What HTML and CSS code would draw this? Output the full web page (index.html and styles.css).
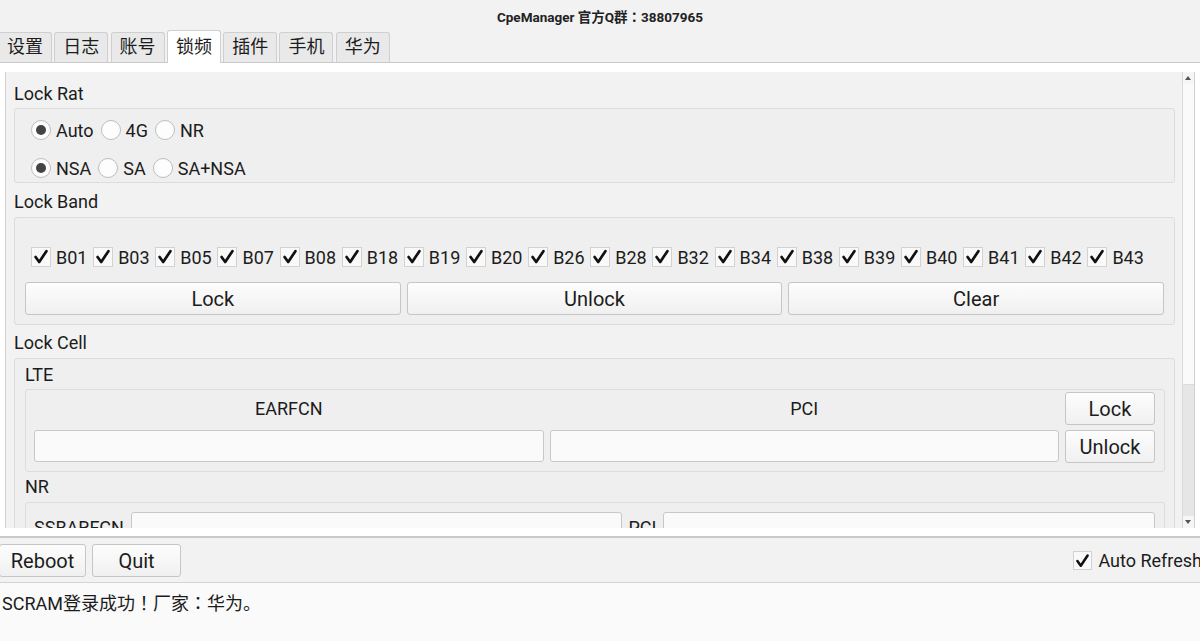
FILE: index.html
```html
<!DOCTYPE html>
<html>
<head>
    <meta charset="UTF-8">
    <title>CpeManager</title>
    <link rel="stylesheet" href="styles.css">
</head>
<body>
    <div class="window">
        <div class="titlebar">CpeManager 官方Q群<span class="punct">：</span>38807965</div>

        <div class="tabs">
            <div class="tab">设置</div>
            <div class="tab">日志</div>
            <div class="tab">账号</div>
            <div class="tab active">锁频</div>
            <div class="tab">插件</div>
            <div class="tab">手机</div>
            <div class="tab">华为</div>
        </div>

        <div class="pane">
            <div class="scroll">
                <div class="scroll-body">
                    <div class="section-title">Lock Rat</div>
                    <div class="group rat-group">
                        <div class="radio-row">
                            <label class="radio checked"><span class="dot"></span>Auto</label>
                            <label class="radio"><span class="dot"></span>4G</label>
                            <label class="radio"><span class="dot"></span>NR</label>
                        </div>
                        <div class="radio-row">
                            <label class="radio checked"><span class="dot"></span>NSA</label>
                            <label class="radio"><span class="dot"></span>SA</label>
                            <label class="radio"><span class="dot"></span>SA+NSA</label>
                        </div>
                    </div>

                    <div class="section-title band-title">Lock Band</div>
                    <div class="group band-group">
                        <div class="check-row" id="bands"></div>
                        <div class="btn-row">
                            <button class="btn">Lock</button>
                            <button class="btn">Unlock</button>
                            <button class="btn">Clear</button>
                        </div>
                    </div>

                    <div class="section-title cell-title">Lock Cell</div>
                    <div class="group cell-group">
                        <div class="sub-title">LTE</div>
                        <div class="group inner lte-grid">
                            <div class="field-label">EARFCN</div>
                            <div class="field-label">PCI</div>
                            <button class="btn small">Lock</button>
                            <input class="input" type="text">
                            <input class="input" type="text">
                            <button class="btn small">Unlock</button>
                        </div>
                        <div class="sub-title nr-title">NR</div>
                        <div class="group inner nr-row">
                            <span class="nr-label">SSBARFCN</span>
                            <input class="input" type="text">
                            <span class="nr-label">PCI</span>
                            <input class="input" type="text">
                        </div>
                    </div>
                </div>
                <div class="scrollbar">
                    <div class="arrow up"></div>
                    <div class="track">
                        <div class="thumb"></div>
                    </div>
                    <div class="arrow down"></div>
                </div>
            </div>
        </div>

        <div class="bottombar">
            <button class="btn bar-btn reboot">Reboot</button>
            <button class="btn bar-btn">Quit</button>
            <label class="check auto-refresh"><span class="box"><svg viewBox="0 0 20 20"><path d="M4 10 L8 15.5 L16 3.5"/></svg></span>Auto Refresh</label>
        </div>

        <div class="log">SCRAM登录成功<span class="punct">！</span>厂家<span class="punct">：</span>华为。</div>
    </div>

    <script>
        // 频段列表
        var bands = ['B01','B03','B05','B07','B08','B18','B19','B20','B26','B28','B32','B34','B38','B39','B40','B41','B42','B43'];
        var row = document.getElementById('bands');
        bands.forEach(function (b) {
            var item = document.createElement('label');
            item.className = 'check';
            item.innerHTML = '<span class="box"><svg viewBox="0 0 20 20"><path d="M4 10 L8 15.5 L16 3.5"/></svg></span>' + b;
            row.appendChild(item);
        });
    </script>
</body>
</html>
```

FILE: styles.css
```css
* {
    margin: 0;
    padding: 0;
    box-sizing: border-box;
}

body {
    font-family: Roboto, "Noto Sans CJK SC", sans-serif;
    font-size: 18px;
    color: #1c1c1c;
    background-color: #f2f2f2;
    overflow: hidden;
}

.window {
    width: 1200px;
    height: 641px;
    display: flex;
    flex-direction: column;
    overflow: hidden;
}

/* 全角标点居中 */
.punct {
    font-family: "Noto Sans CJK TC", sans-serif;
}

.titlebar {
    height: 31px;
    line-height: 32px;
    text-align: center;
    font-size: 13.5px;
    font-weight: bold;
    color: #222;
}

/* tabs */
.tabs {
    height: 32px;
    display: flex;
    align-items: flex-end;
    gap: 2.3px;
    border-bottom: 1px solid #c9c9c9;
}

.tab {
    height: 30px;
    width: 54px;
    line-height: 28px;
    text-align: center;
    background-color: #e9e9e9;
    border: 1px solid #cfcfcf;
    border-bottom: none;
    border-radius: 3px 3px 0 0;
}

.tab:first-child {
    margin-left: -2px;
}

.tab.active {
    height: 33px;
    line-height: 32px;
    background-color: #fff;
    margin-bottom: -1px;
}

/* tab page */
.pane {
    background-color: #fff;
    height: 473px;
    padding: 9px 5px 8px 5px;
}

.scroll {
    display: flex;
    height: 456px;
    border-left: 1px solid #cfcfcf;
    border-right: 1px solid #cfcfcf;
    background-color: #f2f2f2;
}

.scroll-body {
    flex: 1;
    overflow: hidden;
    padding: 0 7px 0 8px;
}

.scrollbar {
    width: 12px;
    display: flex;
    flex-direction: column;
    border-left: 1px solid #dadada;
    background-color: #f6f6f6;
}

.arrow {
    height: 12px;
    position: relative;
}

.arrow::after {
    content: "";
    position: absolute;
    left: 2px;
    top: 4px;
    border-left: 3.5px solid transparent;
    border-right: 3.5px solid transparent;
}

.arrow.up::after {
    border-bottom: 4px solid #555;
}

.arrow.down::after {
    border-top: 4px solid #555;
}

.track {
    flex: 1;
    background-color: #e6e6e6;
}

.thumb {
    height: 301px;
    background-color: #fafafa;
    border-bottom: 1px solid #dcdcdc;
}

/* section headings and groups */
.section-title {
    line-height: 24px;
    padding-top: 10px;
    margin-bottom: 2px;
}

.band-title {
    padding-top: 7px;
    margin-bottom: 3px;
}

.cell-title {
    padding-top: 6px;
    margin-bottom: 3px;
}

.group {
    background-color: #efefef;
    border: 1px solid #dcdcdc;
    border-radius: 3px;
}

.rat-group {
    padding: 9px 10px 2px 16px;
    display: flex;
    flex-direction: column;
    gap: 14px;
}

.radio-row {
    height: 24px;
    display: flex;
    align-items: center;
    gap: 7px;
}

.radio {
    display: flex;
    align-items: center;
    gap: 5px;
}

.radio .dot {
    width: 20px;
    height: 20px;
    border-radius: 50%;
    border: 1px solid #bdbdbd;
    background-color: #fdfdfd;
    position: relative;
}

.radio.checked .dot::after {
    content: "";
    position: absolute;
    left: 4px;
    top: 4px;
    width: 10px;
    height: 10px;
    border-radius: 50%;
    background-color: #444;
}

.band-group {
    padding: 27px 10px 9px 10px;
}

.check-row {
    height: 24px;
    display: flex;
    align-items: center;
    gap: 5.7px;
    padding-left: 6px;
}

.check {
    display: flex;
    align-items: center;
    gap: 5px;
    white-space: nowrap;
}

.check .box {
    width: 20px;
    height: 20px;
    border: 1px solid #d2d2d2;
    background-color: #f9f9f9;
    display: flex;
    align-items: center;
    justify-content: center;
}

.check svg {
    width: 18px;
    height: 18px;
    fill: none;
    stroke: #111;
    stroke-width: 3;
    stroke-linecap: round;
    stroke-linejoin: round;
}

.btn-row {
    display: flex;
    gap: 6px;
    margin-top: 13px;
}

.btn {
    font-family: Roboto, "Noto Sans CJK SC", sans-serif;
    font-size: 20px;
    color: #1c1c1c;
    height: 33px;
    background: linear-gradient(#fdfdfd, #f0f0f0);
    border: 1px solid #c6c6c6;
    border-radius: 3px;
}

.btn-row .btn {
    flex: 1;
}

.cell-group {
    padding: 4px 9px 0 10px;
    height: 200px;
}

.sub-title {
    line-height: 24px;
    margin-bottom: 2px;
}

.nr-title {
    margin-top: 3px;
    margin-bottom: 3px;
}

.inner {
    padding: 2px 9px 8px 8px;
}

.lte-grid {
    display: grid;
    grid-template-columns: 1fr 1fr 90px;
    grid-template-rows: 33px 33px;
    row-gap: 5px;
    column-gap: 6px;
}

.field-label {
    display: flex;
    align-items: center;
    justify-content: center;
}

.input {
    height: 32px;
    background-color: #fafafa;
    border: 1px solid #c8c8c8;
    border-radius: 3px;
    font-size: 18px;
}

.nr-row {
    display: flex;
    align-items: flex-start;
    gap: 6px;
    padding-top: 9px;
}

.nr-row .input {
    flex: 1;
}

.nr-label {
    line-height: 32px;
    margin-right: 1px;
}

/* bottom bar */
.bottombar {
    height: 47px;
    border-top: 2px solid #c9c9c9;
    border-bottom: 1px solid #d4d4d4;
    display: flex;
    align-items: flex-start;
    gap: 6px;
    padding-top: 6px;
    overflow: hidden;
}

.bar-btn {
    width: 89px;
}

.reboot {
    width: 87px;
    margin-left: -1px;
}

.auto-refresh {
    margin-left: auto;
    margin-right: -2px;
    margin-top: 6px;
    gap: 6px;
}

.auto-refresh .box {
    width: 19px;
    height: 19px;
}

/* log */
.log {
    flex: 1;
    background-color: #fafafa;
    padding: 7px 2px;
    line-height: 24px;
}
```
